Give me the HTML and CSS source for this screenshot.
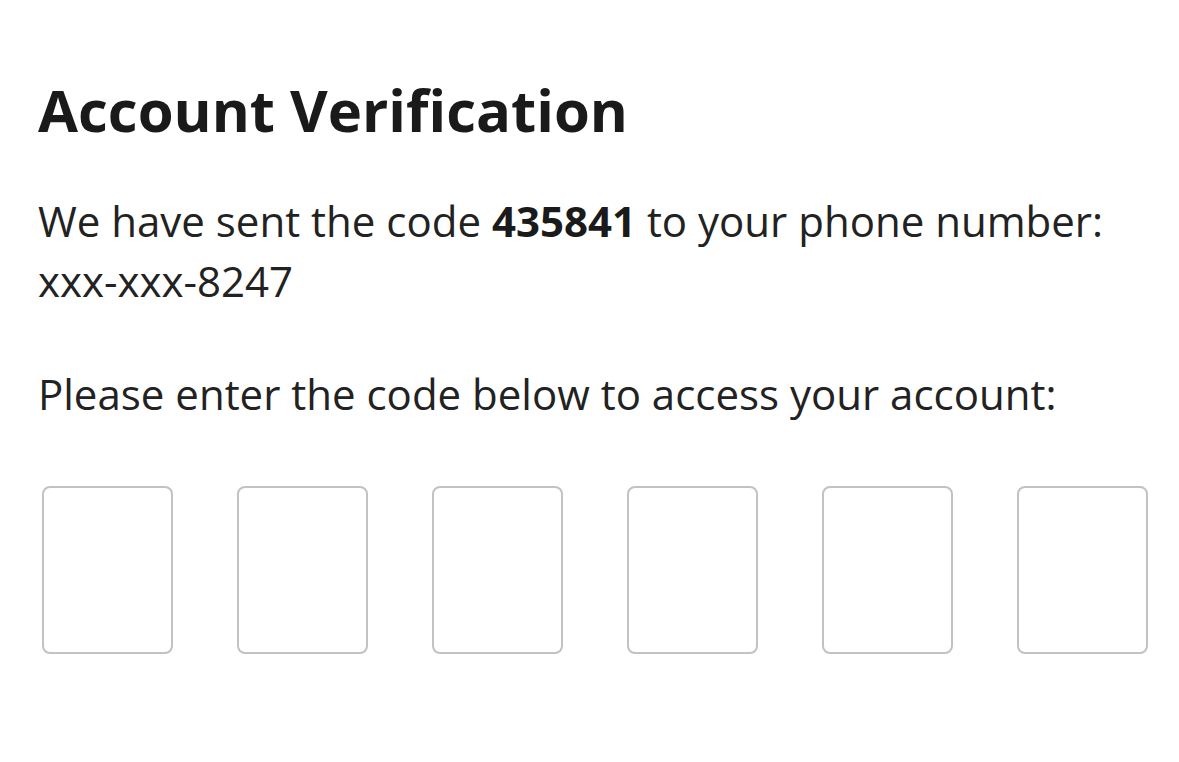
FILE: index.html
```html
<!DOCTYPE html>
<html lang="en">
<head>
    <meta charset="UTF-8">
    <meta name="viewport" content="width=device-width, initial-scale=1.0">
    <title>Account Verification</title>
    <link rel="stylesheet" href="styles.css">
</head>
<body>

    <div class="page">
        <h1>Account Verification</h1>

        <p class="sent">We have sent the code <strong>435841</strong> to your phone number:</p>
        <p class="phone">xxx-xxx-8247</p>

        <p class="prompt">Please enter the code below to access your account:</p>

        <div class="code-row">
            <input class="code-box" type="text" maxlength="1" inputmode="numeric" />
            <input class="code-box" type="text" maxlength="1" inputmode="numeric" />
            <input class="code-box" type="text" maxlength="1" inputmode="numeric" />
            <input class="code-box" type="text" maxlength="1" inputmode="numeric" />
            <input class="code-box" type="text" maxlength="1" inputmode="numeric" />
            <input class="code-box" type="text" maxlength="1" inputmode="numeric" />
        </div>
    </div>

</body>
</html>
```

FILE: styles.css
```css
body {
    font-family: 'Open Sans', 'Noto Sans', sans-serif;
    background-color: #fff;
    color: #222;
    margin: 0;
}

.page {
    padding: 75px 38px 0;
}

h1 {
    font-size: 58px;
    line-height: 1.2;
    font-weight: 700;
    color: #1a1a1a;
    margin: 0;
}

p {
    margin: 0;
    font-size: 42px;
    line-height: 1.2;
    white-space: nowrap;
}

.sent {
    margin-top: 51px;
}

.sent strong {
    font-weight: 700;
    color: #1a1a1a;
}

.phone {
    margin-top: 10px;
}

.prompt {
    margin-top: 63px;
}

.code-row {
    display: flex;
    gap: 64px;
    margin-top: 66px;
    margin-left: 4px;
}

.code-box {
    width: 131px;
    height: 168px;
    box-sizing: border-box;
    border: 2px solid #c2c2c2;
    border-radius: 8px;
    background-color: #fff;
    font-size: 60px;
    text-align: center;
    font-family: inherit;
    outline: none;
}

.code-box:focus {
    border-color: #888;
}
```
